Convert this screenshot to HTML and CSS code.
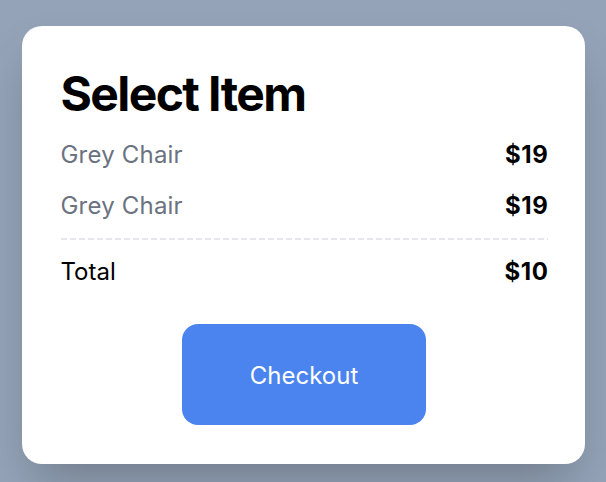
FILE: index.html
```html
<!DOCTYPE html>
<html lang="en">
<head>
<meta charset="utf-8">
<title>Select Item</title>
<link rel="stylesheet" href="styles.css">
</head>
<body>
  <main class="card">
    <h1 class="title">Select Item</h1>
    <div class="row">
      <span class="item-name">Grey Chair</span>
      <span class="price">$19</span>
    </div>
    <div class="row">
      <span class="item-name">Grey Chair</span>
      <span class="price">$19</span>
    </div>
    <div class="divider"></div>
    <div class="row total-row">
      <span class="total-label">Total</span>
      <span class="price">$10</span>
    </div>
    <div class="actions">
      <button class="checkout" type="button">Checkout</button>
    </div>
  </main>
</body>
</html>
```

FILE: styles.css
```css
html, body {
  margin: 0;
  padding: 0;
}

body {
  width: 606px;
  height: 482px;
  background: #94a3b8;
  font-family: Inter, "Noto Sans", "Liberation Sans", sans-serif;
  display: flex;
  justify-content: center;
  align-items: flex-start;
  padding-top: 26px;
  box-sizing: border-box;
  overflow: hidden;
}

.card {
  width: 563px;
  height: 438px;
  box-sizing: border-box;
  background: #ffffff;
  border-radius: 20px;
  padding: 40px 37px 38px 39px;
  box-shadow: 0 25px 50px -12px rgba(0, 0, 0, 0.25);
}

.title {
  margin: 0 0 7px 0;
  font-size: 48px;
  line-height: 56px;
  font-weight: 700;
  color: #000000;
  letter-spacing: -1.6px;
}

.row {
  display: flex;
  justify-content: space-between;
  align-items: center;
  height: 51px;
  font-size: 24px;
  line-height: 30px;
}

.item-name {
  color: #6b7280;
  letter-spacing: 0.2px;
}

.price {
  color: #000000;
  font-weight: 700;
  letter-spacing: 0.6px;
  margin-right: -1px;
}

.divider {
  height: 2px;
  margin-top: 7px;
  background: repeating-linear-gradient(to right, #e5e7eb 0 6px, transparent 6px 9px);
}

.total-row {
  height: 64px;
}

.total-label {
  color: #000000;
}

.actions {
  display: flex;
  justify-content: center;
  padding-top: 20px;
}

.checkout {
  width: 244px;
  height: 101px;
  border: none;
  border-radius: 16px;
  background: #4b84ee;
  color: #ffffff;
  font-family: inherit;
  font-size: 24px;
  padding-top: 3px;
  cursor: pointer;
}
```
